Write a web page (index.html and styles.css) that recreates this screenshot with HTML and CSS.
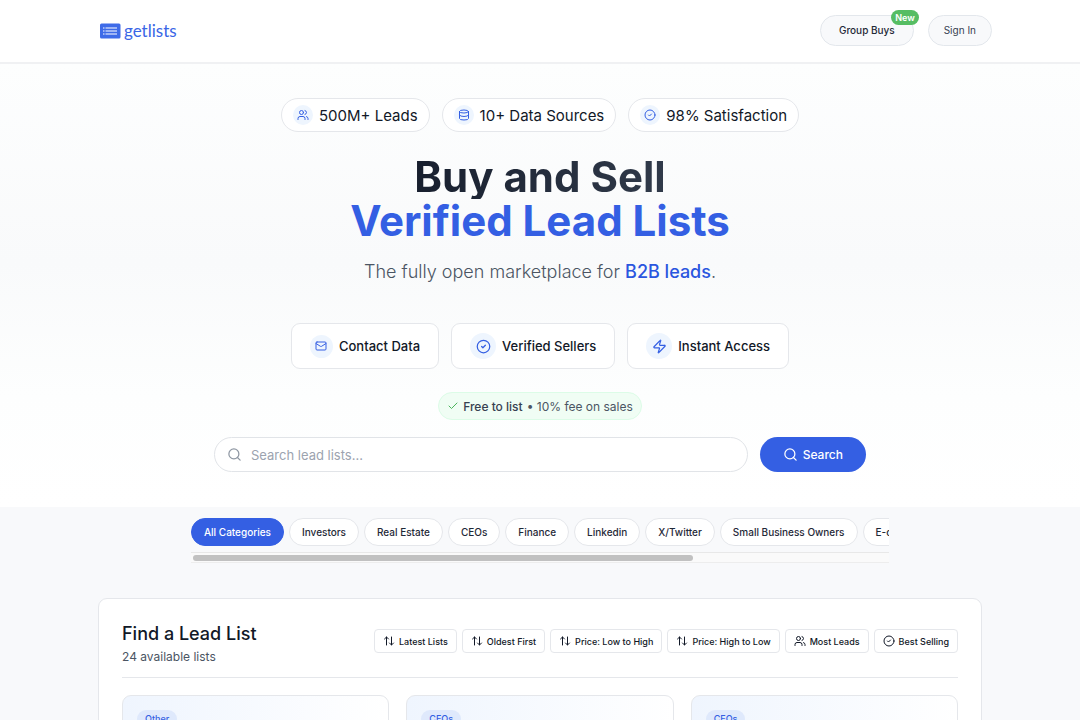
FILE: index.html
```html
<!DOCTYPE html>
<html lang="en">
<head>
  <meta charset="UTF-8" />
  <meta name="viewport" content="width=device-width, initial-scale=1.0"/>
  <title>getlists</title>
  <link rel="stylesheet" href="styles.css">
</head>
<body>
  <!-- Icons -->
  <svg class="sprite" aria-hidden="true">
    <symbol id="users" viewBox="0 0 24 24"><path d="M16 21v-2a4 4 0 0 0-4-4H6a4 4 0 0 0-4 4v2"/><circle cx="9" cy="7" r="4"/><path d="M22 21v-2a4 4 0 0 0-3-3.87M16 3.13a4 4 0 0 1 0 7.75"/></symbol>
    <symbol id="database" viewBox="0 0 24 24"><ellipse cx="12" cy="5" rx="9" ry="3"/><path d="M3 5v14a9 3 0 0 0 18 0V5M3 12a9 3 0 0 0 18 0"/></symbol>
    <symbol id="circle-check" viewBox="0 0 24 24"><circle cx="12" cy="12" r="10"/><path d="m9 12 2 2 4-4"/></symbol>
    <symbol id="mail" viewBox="0 0 24 24"><rect x="2" y="4" width="20" height="16" rx="2"/><path d="m22 7-8.97 5.7a1.94 1.94 0 0 1-2.06 0L2 7"/></symbol>
    <symbol id="zap" viewBox="0 0 24 24"><path d="M4 14a1 1 0 0 1-.78-1.63l9.9-10.2a.5.5 0 0 1 .86.46l-1.92 6.02A1 1 0 0 0 13 10h7a1 1 0 0 1 .78 1.63l-9.9 10.2a.5.5 0 0 1-.86-.46l1.92-6.02A1 1 0 0 0 11 14z"/></symbol>
    <symbol id="check" viewBox="0 0 24 24"><path d="M20 6 9 17l-5-5"/></symbol>
    <symbol id="search" viewBox="0 0 24 24"><circle cx="11" cy="11" r="8"/><path d="m21 21-4.3-4.3"/></symbol>
    <symbol id="sort" viewBox="0 0 24 24"><path d="m21 16-4 4-4-4M17 20V4M3 8l4-4 4 4M7 4v16"/></symbol>
  </svg>

  <header class="navbar">
    <div class="nav-inner">
      <a class="logo" href="#">
        <svg class="logo-mark" viewBox="0 0 22 16" aria-hidden="true">
          <rect x="1" y="0.5" width="20.5" height="15" rx="1.5" fill="#3e6be8"/>
          <path d="M4 5h1.5M4 8h1.5M4 11h1.5M6.5 5h11.5M6.5 8h11.5M6.5 11h11.5" stroke="#fff" stroke-width="1.2"/>
        </svg>
        <span>getlists</span>
      </a>
      <nav class="nav-links">
        <a class="nav-btn group-buys" href="#">Group Buys<span class="badge">New</span></a>
        <a class="nav-btn" href="#">Sign In</a>
      </nav>
    </div>
  </header>

  <main>
    <section class="hero">
      <div class="stats">
        <div class="stat"><span class="dot"><svg class="icon"><use href="#users"/></svg></span>500M+ Leads</div>
        <div class="stat"><span class="dot"><svg class="icon"><use href="#database"/></svg></span>10+ Data Sources</div>
        <div class="stat"><span class="dot"><svg class="icon"><use href="#circle-check"/></svg></span>98% Satisfaction</div>
      </div>

      <h1><span class="title-dark">Buy and Sell</span><span class="title-blue">Verified Lead Lists</span></h1>
      <p class="tagline">The fully open marketplace for <strong>B2B leads</strong>.</p>

      <div class="features">
        <div class="feature"><span class="dot"><svg class="icon"><use href="#mail"/></svg></span>Contact Data</div>
        <div class="feature"><span class="dot large"><svg class="icon"><use href="#circle-check"/></svg></span>Verified Sellers</div>
        <div class="feature"><span class="dot large"><svg class="icon"><use href="#zap"/></svg></span>Instant Access</div>
      </div>

      <div class="fee"><svg class="icon"><use href="#check"/></svg><b>Free to list</b> <span>• 10% fee on sales</span></div>

      <form class="search">
        <label class="search-box">
          <svg class="icon"><use href="#search"/></svg>
          <input type="search" placeholder="Search lead lists..." aria-label="Search lead lists">
        </label>
        <button class="search-btn" type="submit"><svg class="icon"><use href="#search"/></svg>Search</button>
      </form>
    </section>

    <section class="categories">
      <div class="chips">
        <button class="chip active">All Categories</button>
        <button class="chip">Investors</button>
        <button class="chip">Real Estate</button>
        <button class="chip">CEOs</button>
        <button class="chip">Finance</button>
        <button class="chip">Linkedin</button>
        <button class="chip">X/Twitter</button>
        <button class="chip">Small Business Owners</button>
        <button class="chip">E-commerce</button>
      </div>
      <div class="track"><div class="thumb"></div></div>
    </section>

    <section class="lists">
      <div class="lists-head">
        <div>
          <h2>Find a Lead List</h2>
          <p>24 available lists</p>
        </div>
        <div class="sorts">
          <button class="sort"><svg class="icon"><use href="#sort"/></svg>Latest Lists</button>
          <button class="sort"><svg class="icon"><use href="#sort"/></svg>Oldest First</button>
          <button class="sort"><svg class="icon"><use href="#sort"/></svg>Price: Low to High</button>
          <button class="sort"><svg class="icon"><use href="#sort"/></svg>Price: High to Low</button>
          <button class="sort"><svg class="icon"><use href="#users"/></svg>Most Leads</button>
          <button class="sort"><svg class="icon"><use href="#circle-check"/></svg>Best Selling</button>
        </div>
      </div>
      <div class="cards">
        <article class="card"><span class="tag">Other</span></article>
        <article class="card"><span class="tag">CEOs</span></article>
        <article class="card"><span class="tag">CEOs</span></article>
      </div>
    </section>
  </main>
</body>
</html>
```
FILE: styles.css
```css
* {
  box-sizing: border-box;
}

body {
  margin: 0;
  font-family: Inter, "Liberation Sans", sans-serif;
  color: #111827;
  background: #f8f9fb;
  overflow-x: hidden;
}

h1, h2, p {
  margin: 0;
}

a {
  color: inherit;
  text-decoration: none;
}

button, input {
  font-family: inherit;
}

.sprite {
  display: none;
}

.icon {
  width: 12px;
  height: 12px;
  flex: none;
  fill: none;
  stroke: currentColor;
  stroke-width: 2;
  stroke-linecap: round;
  stroke-linejoin: round;
}

/* Navbar */
.navbar {
  background: #fff;
  border-bottom: 2px solid #f0f1f3;
}

.nav-inner {
  max-width: 904px;
  margin: 0 auto;
  padding: 15px 0 16px;
  display: flex;
  justify-content: space-between;
  align-items: center;
}

.logo {
  display: flex;
  align-items: center;
  gap: 3px;
  padding-left: 11px;
  font-family: Lato, sans-serif;
  font-size: 17px;
  line-height: 20px;
  color: #3a66e6;
}

.logo-mark {
  width: 22px;
  height: 16px;
}

.nav-links {
  display: flex;
  gap: 14px;
}

.nav-btn {
  position: relative;
  padding: 0 15px;
  border: 1px solid #e3e7ec;
  border-radius: 16px;
  background: #f8f9fb;
  font-size: 10px;
  line-height: 29px;
  color: #374151;
}

.group-buys {
  padding: 0 18px;
  font-weight: 500;
  color: #1f2937;
}

.badge {
  position: absolute;
  top: -6px;
  right: -6px;
  padding: 0 4px;
  border-radius: 8px;
  background: #56bd63;
  font-size: 9px;
  line-height: 15px;
  font-weight: 600;
  color: #fff;
}

/* Hero */
.hero {
  display: flex;
  flex-direction: column;
  align-items: center;
  padding: 34px 24px 35px;
  background: linear-gradient(to bottom, #fdfefe, #f9fafb 45%, #fdfefe 75%, #fff);
}

.stats, .features {
  display: flex;
  justify-content: center;
  gap: 12px;
}

.stat {
  display: flex;
  align-items: center;
  gap: 6px;
  height: 34px;
  padding: 0 11px;
  border: 1px solid #e5e7eb;
  border-radius: 17px;
  background: #fff;
  font-size: 15px;
}

.dot {
  display: flex;
  align-items: center;
  justify-content: center;
  width: 20px;
  height: 20px;
  border-radius: 50%;
  background: #eef5fe;
  color: #345fe3;
}

h1 {
  margin-top: 23px;
  font-size: 42px;
  line-height: 44px;
  font-weight: 700;
  text-align: center;
}

h1 span {
  display: block;
}

.title-dark {
  background: linear-gradient(to right, #111827, #374151);
  background-clip: text;
  -webkit-background-clip: text;
  color: transparent;
}

.title-blue {
  color: #345fe3;
}

.tagline {
  margin-top: 16px;
  font-size: 18px;
  line-height: 26px;
  font-weight: 300;
  color: #4b5563;
}

.tagline strong {
  font-weight: 500;
  color: #2a56df;
}

.features {
  margin-top: 38px;
}

.feature {
  display: flex;
  align-items: center;
  gap: 6px;
  height: 46px;
  padding: 0 18px;
  border: 1px solid #e5e7eb;
  border-radius: 9px;
  background: #fff;
  font-size: 13px;
  font-weight: 500;
}

.feature .dot {
  width: 23px;
  height: 23px;
}

.feature .large {
  width: 26px;
  height: 26px;
}

.large .icon {
  width: 15px;
  height: 15px;
}

.fee {
  display: flex;
  align-items: center;
  gap: 4px;
  height: 28px;
  margin-top: 23px;
  padding: 0 8px;
  border: 1px solid #dcfce7;
  border-radius: 14px;
  background: #f0fdf4;
  font-size: 12px;
  color: #4b5563;
}

.fee b {
  font-weight: 500;
  color: #374151;
}

.fee .icon {
  color: #4bb55c;
}

/* Search */
.search {
  display: flex;
  gap: 12px;
  width: 100%;
  max-width: 652px;
  margin-top: 17px;
}

.search-box {
  flex: 1;
  display: flex;
  align-items: center;
  gap: 9px;
  height: 35px;
  padding: 0 12px;
  border: 1px solid #e1e4e8;
  border-radius: 18px;
  background: #fff;
  color: #8f97a3;
}

.search .icon {
  width: 15px;
  height: 15px;
}

.search input {
  flex: 1;
  padding: 0;
  border: 0;
  outline: 0;
  background: none;
  font-size: 13px;
}

.search input::placeholder {
  color: #9ca3af;
}

.search-btn {
  display: flex;
  align-items: center;
  justify-content: center;
  gap: 5px;
  padding: 0 23px;
  border: 0;
  border-radius: 18px;
  background: #345fe3;
  font-size: 12px;
  font-weight: 500;
  color: #fff;
}

/* Categories */
.categories {
  max-width: 698px;
  margin: 0 auto;
  padding-top: 11px;
}

.chips {
  display: flex;
  gap: 5px;
  overflow: hidden;
}

.chip {
  flex: none;
  height: 28px;
  padding: 0 12px;
  border: 1px solid #e5e7eb;
  border-radius: 14px;
  background: #fff;
  font-size: 10px;
  font-weight: 500;
  color: #1f2937;
}

.chip.active {
  border-color: #345fe3;
  background: #345fe3;
  color: #fff;
}

.track {
  height: 11px;
  margin-top: 6px;
  padding: 2px;
  border-top: 1px solid #e8e8e8;
  border-bottom: 1px solid #ededed;
  background: #fafafa;
}

.thumb {
  width: 72%;
  height: 6px;
  border-radius: 3px;
  background: #c1c1c1;
}

/* Lead lists */
.lists {
  max-width: 884px;
  margin: 35px auto 0;
  padding: 23px;
  border: 1px solid #e5e7eb;
  border-radius: 9px;
  background: #fff;
}

.lists-head {
  display: flex;
  justify-content: space-between;
  align-items: flex-start;
  padding-bottom: 10px;
  border-bottom: 1px solid #e5e7eb;
}

h2 {
  font-size: 18px;
  line-height: 24px;
  font-weight: 500;
}

.lists-head p {
  margin-top: 1px;
  font-size: 12px;
  line-height: 20px;
  color: #4b5563;
}

.sorts {
  display: flex;
  gap: 5px;
  padding-top: 7px;
}

.sort {
  display: flex;
  align-items: center;
  gap: 4px;
  height: 24px;
  padding: 0 8px;
  border: 1px solid #e5e7eb;
  border-radius: 4px;
  background: #fff;
  font-size: 9px;
  font-weight: 500;
  white-space: nowrap;
  color: #111827;
}

.cards {
  display: grid;
  grid-template-columns: repeat(3, 1fr);
  gap: 17px;
  margin-top: 17px;
}

.card {
  display: flex;
  align-items: flex-start;
  height: 240px;
  padding: 14px;
  border: 1px solid #e5e7eb;
  border-radius: 9px;
  background: linear-gradient(to right, #eff5fe, #fff);
}

.tag {
  padding: 0 8px;
  border-radius: 9px;
  background: #dfe9fc;
  font-size: 9px;
  line-height: 18px;
  font-weight: 500;
  color: #345fe3;
}
```
